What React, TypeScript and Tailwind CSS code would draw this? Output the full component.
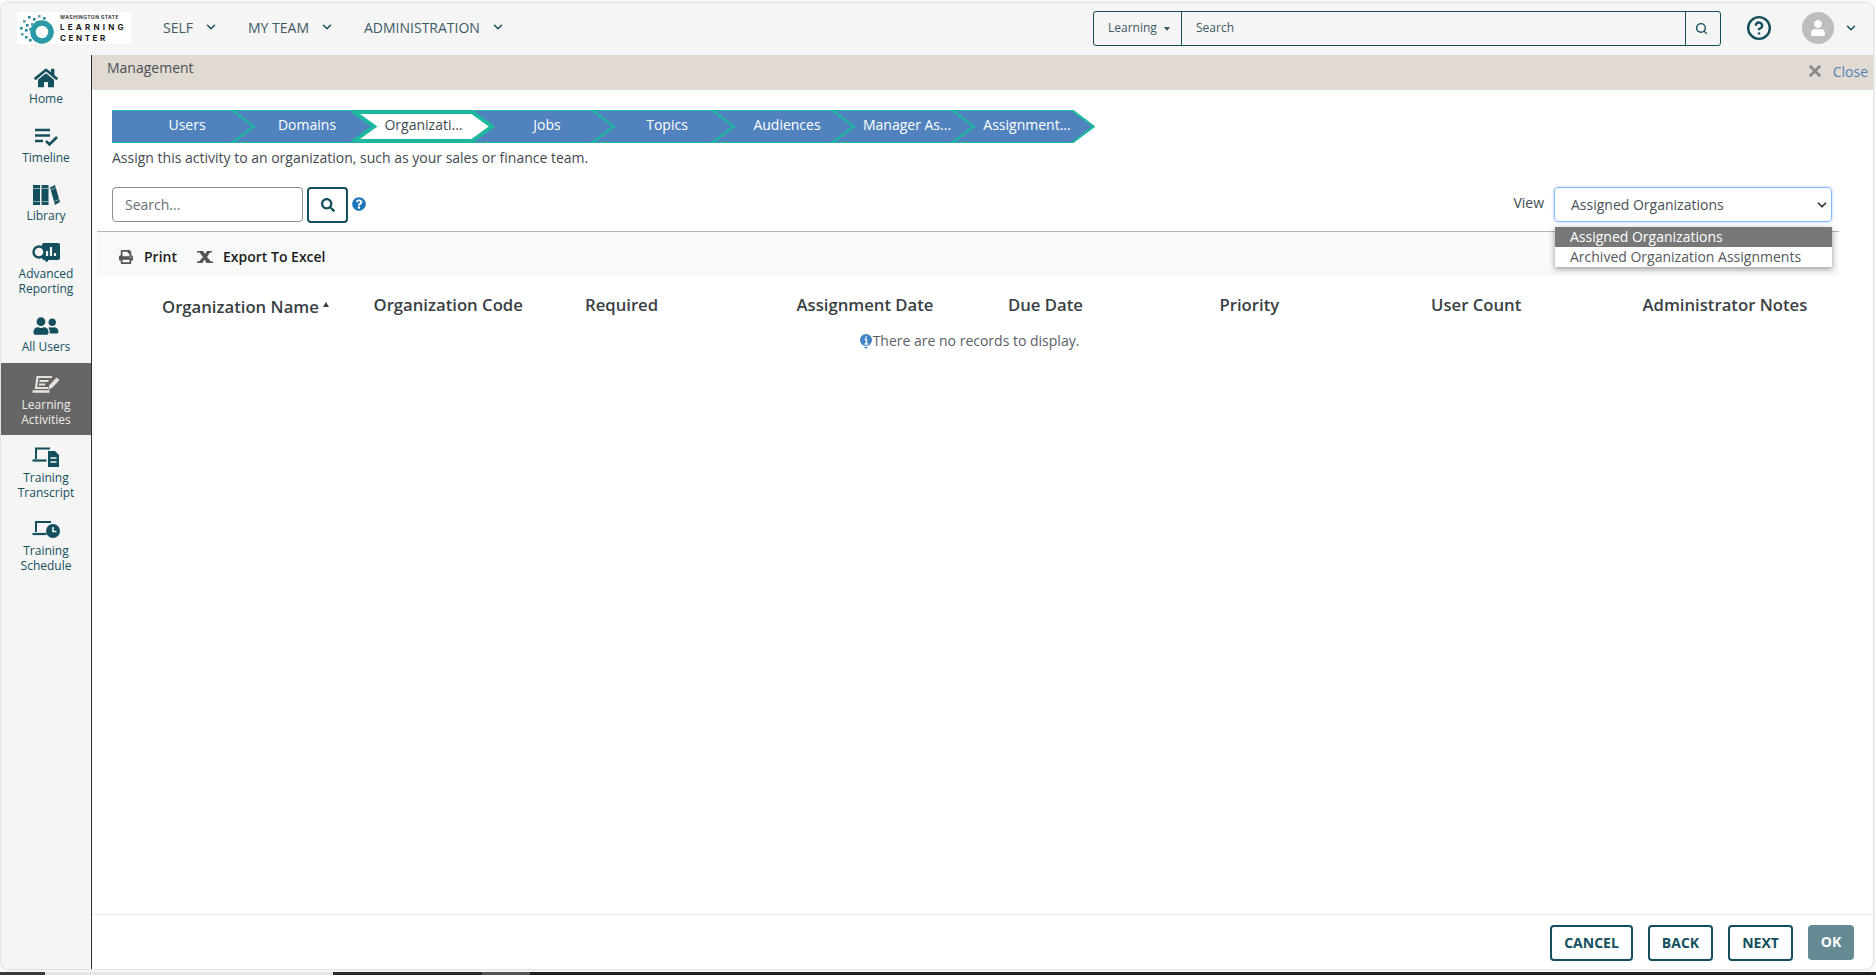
import { ChevronDown, CircleHelp, Search, X } from "lucide-react"
import { FaHome, FaPrint, FaQuestionCircle, FaSearch, FaUser, FaUserFriends } from "react-icons/fa"

const steps = ["Users", "Domains", "Organizati...", "Jobs", "Topics", "Audiences", "Manager As...", "Assignment..."]
const columns = ["Organization Name", "Organization Code", "Required", "Assignment Date", "Due Date", "Priority", "User Count", "Administrator Notes"]

function Logo() {
  const dots = [
    [6, 8], [11, 4], [16, 6], [21, 3], [26, 5], [9, 12], [14, 11], [3, 15], [8, 17], [4, 21], [8, 24], [12, 27], [12, 16], [19, 9],
  ]
  return (
    <div className="flex h-[32px] w-[114px] items-center bg-white">
      <svg viewBox="0 0 41 32" className="h-[32px] w-[41px] shrink-0">
        {dots.map(([x, y], i) => (
          <rect key={i} x={x} y={y} width="2.6" height="2.6" fill={i % 3 === 0 ? "#5aa3ad" : "#2a8b98"} />
        ))}
        <circle cx="25" cy="20" r="9" fill="none" stroke="#2a9aa6" strokeWidth="5.5" />
      </svg>
      <div className="ml-[2px] text-[#1a1a1a]" style={{ fontFamily: "Inter, sans-serif" }}>
        <div className="whitespace-nowrap text-[5px] font-semibold leading-[9px] tracking-[0.45px]">WASHINGTON STATE</div>
        <div className="text-[8px] font-bold leading-[11px] tracking-[3.2px]">LEARNING</div>
        <div className="text-[8px] font-bold leading-[11px] tracking-[2.6px]">CENTER</div>
      </div>
    </div>
  )
}

function NavItem({ label }: { label: string }) {
  return (
    <div className="flex items-center gap-[11px] text-[14px] text-[#3c5a66]">
      {label}
      <ChevronDown className="h-[14px] w-[14px] text-[#134f5c]" strokeWidth={2.5} />
    </div>
  )
}

function TimelineIcon() {
  return (
    <svg viewBox="0 0 26 20" className="h-[20px] w-[26px]" fill="none" stroke="#134f5c" strokeWidth="2.6">
      <path d="M2 3h15M2 8.5h15M2 14h8" />
      <path d="M13 14l3.5 3.5L24 10" />
    </svg>
  )
}

function LibraryIcon() {
  return (
    <svg viewBox="0 0 28 22" className="h-[22px] w-[28px]">
      <rect x="1" y="1" width="7" height="20" fill="#134f5c" />
      <rect x="9.5" y="1" width="7" height="20" fill="#134f5c" />
      <path d="M18 3.5l5-2.5 5 17-5 3z" fill="#134f5c" />
      <path d="M1 4.5h7M9.5 4.5h7M1 17.5h7M9.5 17.5h7M19 6l5-2.5M22.5 17.5l4.5-2" stroke="#8aa8ae" strokeWidth="1" />
    </svg>
  )
}

function ReportingIcon() {
  return (
    <svg viewBox="0 0 30 22" className="h-[22px] w-[30px]">
      <rect x="11" y="1" width="18" height="17" rx="2" fill="#134f5c" />
      <path d="M16 14V9M20 14V5M24 14v-3" stroke="#f5f5f5" strokeWidth="2.2" />
      <circle cx="8" cy="10" r="5.5" fill="#f5f5f5" stroke="#134f5c" strokeWidth="2.4" />
      <path d="M12 14.5l4.5 5" stroke="#134f5c" strokeWidth="2.6" />
    </svg>
  )
}

function ActivitiesIcon() {
  return (
    <svg viewBox="0 0 28 20" className="h-[20px] w-[28px]" fill="none" stroke="#e6e1da" strokeWidth="2.2">
      <path d="M20 3H5.5L4 14h12" />
      <path d="M7.5 7h9M7 10.5h6" />
      <path d="M0.5 17.5h17" strokeWidth="2.6" />
      <path d="M16 16l1.5-5 7-7.5 3 2.5-7 7.5z" fill="#e6e1da" stroke="none" />
    </svg>
  )
}

function TranscriptIcon() {
  return (
    <svg viewBox="0 0 28 22" className="h-[22px] w-[28px]">
      <path d="M4 13V2.5h14" fill="none" stroke="#134f5c" strokeWidth="2" />
      <path d="M0.5 14.5h14" fill="none" stroke="#134f5c" strokeWidth="2.2" />
      <path d="M16 5h7l4 4v12H16z" fill="#134f5c" />
      <path d="M18.5 12h6M18.5 16h6" stroke="#f5f5f5" strokeWidth="1.6" />
    </svg>
  )
}

function ScheduleIcon() {
  return (
    <svg viewBox="0 0 28 20" className="h-[20px] w-[28px]">
      <path d="M4 12V2h15" fill="none" stroke="#134f5c" strokeWidth="2" />
      <path d="M0.5 14h14" fill="none" stroke="#134f5c" strokeWidth="2.2" />
      <circle cx="21" cy="11" r="7" fill="#134f5c" />
      <path d="M21 7v4.5h3.5" fill="none" stroke="#f5f5f5" strokeWidth="1.6" />
    </svg>
  )
}

function SideItem({ icon, label, active, className }: { icon: React.ReactNode; label: string[]; active?: boolean; className: string }) {
  return (
    <div className={`flex flex-col items-center ${className} ${active ? "bg-[#666666] text-[#f0ece6]" : "text-[#134f5c]"}`}>
      <div className="flex h-[22px] items-center">{icon}</div>
      <div className="mt-[3px] text-center text-[12px] leading-[14.5px]">
        {label.map((l) => (
          <div key={l}>{l}</div>
        ))}
      </div>
    </div>
  )
}

function Step({ label, index }: { label: string; index: number }) {
  const active = index === 2
  return (
    <div
      className={`relative flex h-[33px] w-[120px] items-center justify-center pb-[5px] text-[14px] ${active ? "pl-[23px]" : "pl-[30px]"}`}
      style={{ zIndex: active ? 20 : 10 - index }}
    >
      <svg viewBox="0 0 143 33" className="absolute left-0 top-0 h-[33px] w-[143px]">
        {active ? (
          <path d="M2 2H120L140 16.5 120 31H2L22 16.5Z" fill="#ffffff" stroke="#1eb8a0" strokeWidth="4" />
        ) : (
          <>
            <path d="M0 0H120L142 16.5 120 33H0Z" fill="#5083be" />
            <path d="M0 .5H120L141 16.5 120 32.5H0" fill="none" stroke="#1eb8a0" strokeWidth="1.2" />
            <path d="M120 0L142 16.5 120 33" fill="none" stroke="#1eb8a0" strokeWidth="1.8" />
          </>
        )}
      </svg>
      <span className={`relative ${active ? "text-[#3d4a52]" : "text-white"}`}>{label}</span>
    </div>
  )
}

export default function App() {
  return (
    <div className="flex h-[975px] w-[1876px] flex-col overflow-hidden bg-[#fafafa] text-[14px]" style={{ fontFamily: '"Open Sans", sans-serif' }}>
      <div className="ml-px mr-[3px] mt-[3px] flex h-[966px] shrink-0 flex-col overflow-hidden rounded-[8px] bg-white shadow-[0_0_3px_rgba(0,0,0,0.25)]">
        {/* top bar */}
        <div className="flex h-[52px] shrink-0 items-center bg-[#f5f5f5] pb-[2px] pl-[16px] pr-[15px]">
          <Logo />
          <div className="mb-[2px] ml-[32px] flex items-center gap-[30px]">
            <NavItem label="SELF" />
            <NavItem label="MY TEAM" />
            <NavItem label="ADMINISTRATION" />
          </div>
          <div className="ml-auto flex h-[35px] w-[628px] items-center rounded-[3px] border border-[#134f5c] text-[12px] text-[#3c5a66]">
            <div className="flex h-full w-[88px] items-center gap-[7px] border-r border-[#134f5c] pl-[14px]">
              Learning
              <span className="mt-[2px] h-0 w-0 border-x-[3.5px] border-t-[4px] border-x-transparent border-t-[#3c5a66]" />
            </div>
            <div className="flex-1 pl-[14px]">Search</div>
            <div className="flex h-full w-[35px] items-center justify-center border-l border-[#134f5c] pr-[3px]">
              <Search className="h-[13px] w-[13px] text-[#134f5c]" strokeWidth={2.5} />
            </div>
          </div>
          <CircleHelp className="ml-[25px] h-[26px] w-[26px] text-[#134f5c]" strokeWidth={2.2} />
          <div className="ml-[30px] flex h-[32px] w-[32px] items-center justify-center overflow-hidden rounded-full bg-[#bdbdbd]">
            <FaUser className="h-[16px] w-[16px] text-white" />
          </div>
          <ChevronDown className="ml-[10px] h-[14px] w-[14px] text-[#134f5c]" strokeWidth={2.5} />
        </div>

        <div className="flex min-h-0 flex-1">
          {/* sidebar */}
          <div className="flex w-[91px] shrink-0 flex-col border-r border-[#2e2e2e] bg-[#f5f5f5] pt-[12px]">
            <SideItem icon={<FaHome className="h-[22px] w-[24px] text-[#134f5c]" />} label={["Home"]} className="h-[59px]" />
            <SideItem icon={<TimelineIcon />} label={["Timeline"]} className="h-[58px]" />
            <SideItem icon={<LibraryIcon />} label={["Library"]} className="h-[58px]" />
            <SideItem icon={<ReportingIcon />} label={["Advanced", "Reporting"]} className="h-[73px]" />
            <SideItem icon={<FaUserFriends className="h-[20px] w-[26px] text-[#134f5c]" />} label={["All Users"]} className="h-[48px]" />
            <SideItem icon={<ActivitiesIcon />} label={["Learning", "Activities"]} active className="h-[72px] pt-[10px]" />
            <SideItem icon={<TranscriptIcon />} label={["Training", "Transcript"]} className="h-[73px] pt-[11px]" />
            <SideItem icon={<ScheduleIcon />} label={["Training", "Schedule"]} className="pt-[11px]" />
          </div>

          {/* main */}
          <div className="flex min-w-0 flex-1 flex-col">
            <div className="flex h-[35px] shrink-0 justify-between bg-[#e1dad2] pl-[15px] pr-[5px]">
              <div className="pt-[2px] text-[#4a4f52]">Management</div>
              <div className="flex items-center gap-[9px] pb-[3px] text-[#4f81b5]">
                <X className="h-[18px] w-[18px] text-[#8a8a8a]" strokeWidth={3.5} />
                Close
              </div>
            </div>

            <div className="flex min-h-0 flex-1 flex-col pl-[5px] pr-[34px]">
              <div className="flex pl-[15px] pt-[20px]">
                {steps.map((s, i) => (
                  <Step key={s} label={s} index={i} />
                ))}
              </div>
              <div className="pl-[15px] pt-[5px] leading-[20px] text-[#434a50]">Assign this activity to an organization, such as your sales or finance team.</div>

              <div className="relative flex items-start pl-[15px] pt-[19px]">
                <div className="flex h-[35px] w-[191px] items-center rounded-[4px] border border-[#8e8e8e] pl-[12px] text-[#6a6f73]">Search...</div>
                <div className="ml-[4px] flex h-[36px] w-[41px] items-center justify-center rounded-[4px] border-2 border-[#134f5c]">
                  <FaSearch className="h-[14px] w-[14px] text-[#134f5c]" />
                </div>
                <FaQuestionCircle className="ml-[4px] mt-[10px] h-[14px] w-[14px] text-[#1b75bb]" />
                <div className="ml-auto mr-[10px] mt-[5px] text-[#434a50]">View</div>
                <div className="relative mr-[7px]">
                  <div className="flex h-[35px] w-[278px] items-center justify-between rounded-[4px] border border-[#86b7fe] pl-[16px] pr-[2px] text-[#495057] shadow-[0_0_3px_rgba(13,110,253,0.35)]">
                    Assigned Organizations
                    <ChevronDown className="h-[14px] w-[14px] text-[#333333]" strokeWidth={3} />
                  </div>
                  <div className="absolute left-px top-[40px] z-30 w-[277px] bg-white shadow-[0_2px_6px_rgba(0,0,0,0.4)]">
                    <div className="h-[20px] bg-[#787878] pl-[15px] leading-[20px] text-white">Assigned Organizations</div>
                    <div className="h-[20px] pl-[15px] leading-[20px] text-[#55595c]">Archived Organization Assignments</div>
                  </div>
                </div>
              </div>

              <div className="mt-[8px] flex h-[45px] shrink-0 items-center border-t border-[#b5b5b5] bg-[#f8f9f9] pl-[22px] pt-[5px] font-semibold text-[#1c1c1c]">
                <FaPrint className="h-[14px] w-[14px] text-[#555555]" />
                <span className="ml-[11px]">Print</span>
                <svg viewBox="0 0 16 12" className="ml-[20px] h-[12px] w-[16px]" fill="#555555">
                  <path d="M0 0h6l2 3 2-3h5v1.5h-2L10 6l4 4.5h2V12H9.5L7.5 8.5 5.5 12H0v-1.5h2L6 6 2.5 1.5H0z" />
                </svg>
                <span className="ml-[10px]">Export To Excel</span>
              </div>

              <div className="grid grid-cols-[211.5px_211.5px_211.5px_211.5px_211.5px_211.5px_211.5px_211.5px] pl-[65px] pt-[18px] text-[16.7px] font-semibold leading-[22px] text-[#3a3f44]">
                {columns.map((c, i) => (
                  <div key={c} className={i === 0 ? "relative top-[2px] whitespace-nowrap" : "whitespace-nowrap"}>
                    {c}
                    {i === 0 && <span className="ml-[4px] inline-block h-0 w-0 -translate-y-[6px] border-x-[3px] border-b-[5px] border-x-transparent border-b-[#3a3f44]" />}
                  </div>
                ))}
              </div>

              <div className="flex items-center justify-center pl-[2px] pt-[14px] text-[#5a6066]">
                <svg viewBox="0 0 14 16" className="h-[16px] w-[14px]">
                  <circle cx="7" cy="7" r="6" fill="#3f83c4" />
                  <path d="M5 14l2 2 2-2z" fill="#3f83c4" />
                  <path d="M7 3.2v1.6M5.6 6.3H7.4V11M5.6 11h3.4" stroke="#ffffff" strokeWidth="1.4" fill="none" />
                </svg>
                There are no records to display.
              </div>
            </div>

            <div className="flex h-[55px] shrink-0 items-start justify-end gap-[15px] border-t border-[#ececec] pr-[19px] pt-[10px] text-[14px] font-bold text-[#134f5c]">
              <div className="flex h-[36px] w-[83px] items-center justify-center rounded-[4px] border-2 border-[#134f5c] pb-[2px]">CANCEL</div>
              <div className="flex h-[36px] w-[65px] items-center justify-center rounded-[4px] border-2 border-[#134f5c] pb-[2px]">BACK</div>
              <div className="flex h-[36px] w-[65px] items-center justify-center rounded-[4px] border-2 border-[#134f5c] pb-[2px]">NEXT</div>
              <div className="flex h-[35px] w-[46px] items-center justify-center rounded-[4px] bg-[#658a94] pb-[2px] text-white">OK</div>
            </div>
          </div>
        </div>
      </div>

      {/* desktop taskbar peeking out under the window */}
      <div className="mt-auto flex h-[3px] shrink-0 bg-[#1e1e1e]">
        <div className="w-[45px] bg-[#3a3a3a]" />
        <div className="w-[288px] bg-[#e4e4e4]" />
        <div className="w-[149px] bg-[#2a2a2a]" />
        <div className="w-[48px] bg-[#555555]" />
      </div>
    </div>
  )
}
